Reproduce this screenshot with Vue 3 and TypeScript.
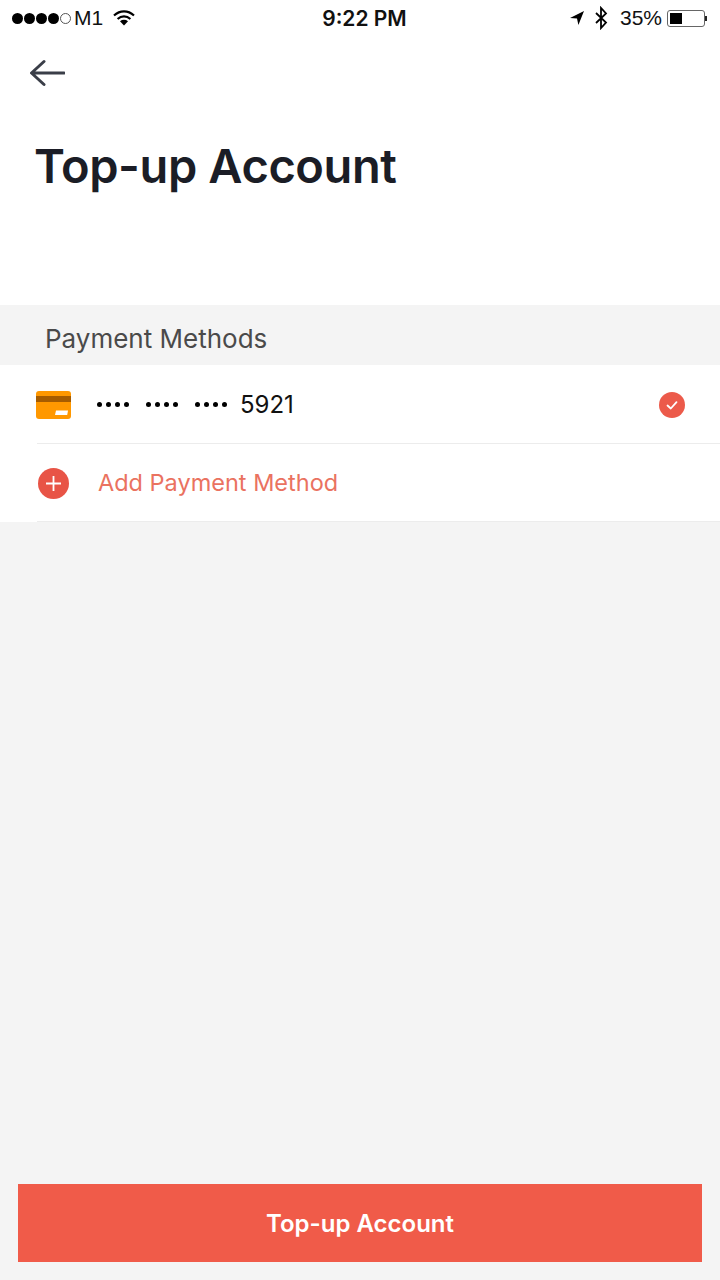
<template>
  <div class="screen">
    <header class="top">
      <div class="status">
        <div class="status-left">
          <span class="signal">
            <i v-for="n in 4" :key="n" class="dot"></i>
            <i class="dot dot-empty"></i>
          </span>
          <span class="carrier">M1</span>
          <svg class="wifi" width="24" height="18" viewBox="0 0 24 18">
            <path d="M2 6.5C8 1 16 1 22 6.5" fill="none" stroke="#000" stroke-width="2.2" />
            <path d="M5.6 10C9.4 6.6 14.6 6.6 18.4 10" fill="none" stroke="#000" stroke-width="2.2" />
            <path d="M8 12.2C10.4 10.4 13.6 10.4 16 12.2L12 16.5Z" fill="#000" />
          </svg>
        </div>
        <span class="clock">9:22 PM</span>
        <div class="status-right">
          <svg width="16" height="16" viewBox="0 0 16 16">
            <path d="M15 1L1 8L8 8.4L9.4 15Z" fill="#000" />
          </svg>
          <svg class="bt" width="14" height="24" viewBox="0 0 14 24">
            <path d="M2 7L12 16.5L7 22V2L12 7.5L2 17" fill="none" stroke="#000" stroke-width="1.8" />
          </svg>
          <span class="percent">35%</span>
          <span class="battery"><span class="battery-fill" :style="{ width: batteryLevel + '%' }"></span></span>
          <span class="battery-tip"></span>
        </div>
      </div>
      <button class="back" type="button" aria-label="Back">
        <svg width="36" height="30" viewBox="0 0 36 30">
          <path d="M35 15H3M15 3.5L2.5 15L15 26.5" fill="none" stroke="#3a3e48" stroke-width="3" stroke-linecap="round" stroke-linejoin="round" />
        </svg>
      </button>
      <h1 class="title">Top-up Account</h1>
    </header>

    <div class="section-label">Payment Methods</div>

    <section class="list">
      <div class="row row-card">
        <svg class="card" width="35" height="28" viewBox="0 0 35 28">
          <rect width="35" height="28" rx="3" fill="#ff9800" />
          <rect y="5" width="35" height="6" fill="#a65c00" />
          <path d="M19 24L20 19.5H32L31.2 24Z" fill="#fff" />
        </svg>
        <span class="masked">
          <span v-for="g in 3" :key="g" class="group"><i v-for="n in 4" :key="n"></i></span>
        </span>
        <span class="last4">5921</span>
        <svg class="check" width="26" height="26" viewBox="0 0 26 26">
          <circle cx="13" cy="13" r="13" fill="#ec5a4a" />
          <path d="M8.5 13.5L11.8 16.5L17.5 10.2" fill="none" stroke="#fff" stroke-width="1.8" stroke-linecap="round" stroke-linejoin="round" />
        </svg>
      </div>
      <div class="row row-add">
        <svg class="plus" width="31" height="31" viewBox="0 0 31 31">
          <circle cx="15.5" cy="15.5" r="15.5" fill="#e85446" />
          <path d="M15.5 8V23M8 15.5H23" stroke="#fff" stroke-width="1.8" />
        </svg>
        <span class="add-label">Add Payment Method</span>
      </div>
    </section>

    <div class="spacer"></div>

    <footer class="footer">
      <button class="submit" type="button">Top-up Account</button>
    </footer>
  </div>
</template>

<script setup lang="ts">
const batteryLevel: number = 38
</script>

<style>
body {
  margin: 0;
}
</style>

<style scoped>
.screen {
  width: 720px;
  height: 1280px;
  display: flex;
  flex-direction: column;
  background: #f4f4f4;
  font-family: "Liberation Sans", Arial, sans-serif;
  overflow: hidden;
}

.top {
  height: 305px;
  box-sizing: border-box;
  background: #fff;
}

.status {
  height: 36px;
  padding: 0 13px 0 12px;
  display: grid;
  grid-template-columns: 1fr auto 1fr;
  align-items: center;
  color: #111;
  font-size: 21px;
}

.status-left,
.status-right {
  display: flex;
  align-items: center;
}

.status-right {
  justify-content: flex-end;
}

.signal {
  display: flex;
  gap: 1px;
}

.dot {
  width: 11px;
  height: 11px;
  border-radius: 50%;
  background: #000;
  box-sizing: border-box;
}

.dot-empty {
  background: transparent;
  border: 1px solid #555;
}

.carrier {
  margin-left: 3px;
}

.wifi {
  margin-left: 9px;
}

.clock {
  margin-left: 10px;
  font-weight: 600;
  font-size: 21px;
  font-family: Inter, "Liberation Sans", sans-serif;
}

.bt {
  margin-left: 9px;
}

.percent {
  margin-left: 12px;
}

.battery {
  width: 38px;
  height: 17px;
  margin-left: 5px;
  padding: 2px;
  box-sizing: border-box;
  display: block;
  border: 1px solid #666;
  border-radius: 3px;
}

.battery-fill {
  display: block;
  height: 100%;
  background: #000;
}

.battery-tip {
  width: 2px;
  height: 5px;
  background: #222;
}

.back {
  display: block;
  margin: 22px 0 0 29px;
  padding: 0;
  border: none;
  background: none;
  height: 30px;
}

.title {
  margin: 50px 0 0 34px;
  font-size: 47px;
  line-height: 56px;
  font-weight: 600;
  font-family: Inter, "Liberation Sans", sans-serif;
  letter-spacing: -0.4px;
  color: #1b1d26;
}

.section-label {
  height: 60px;
  padding: 15px 0 0 45px;
  box-sizing: border-box;
  font-size: 26px;
  line-height: 38px;
  color: #4a4a4a;
  font-family: Inter, "Liberation Sans", sans-serif;
}

.list {
  background: #fff;
}

.row {
  height: 78px;
  padding-left: 36px;
  display: flex;
  align-items: center;
  position: relative;
}

.row-card {
  height: 79px;
}

.row::after {
  content: "";
  position: absolute;
  left: 37px;
  right: 0;
  bottom: 0;
  height: 1px;
  background: #ececec;
}

.masked {
  display: flex;
  gap: 17px;
  margin-left: 26px;
}

.group {
  display: flex;
  gap: 4px;
}

.group i {
  width: 5px;
  height: 5px;
  border-radius: 50%;
  background: #000;
}

.last4 {
  margin-left: 13px;
  font-size: 24px;
  color: #111;
  font-family: Inter, "Liberation Sans", sans-serif;
}

.check {
  margin-left: auto;
  margin-right: 35px;
}

.row-add {
  padding-left: 38px;
}

.add-label {
  margin: -2px 0 0 29px;
  font-size: 23.5px;
  color: #ea7260;
  font-family: Inter, "Liberation Sans", sans-serif;
}

.spacer {
  flex: 1;
}

.footer {
  padding: 0 18px 18px;
}

.submit {
  display: block;
  width: 100%;
  height: 78px;
  border: none;
  border-radius: 0;
  background: #f05b49;
  color: #fff;
  font-size: 24px;
  font-weight: 600;
  font-family: Inter, "Liberation Sans", sans-serif;
}
</style>
